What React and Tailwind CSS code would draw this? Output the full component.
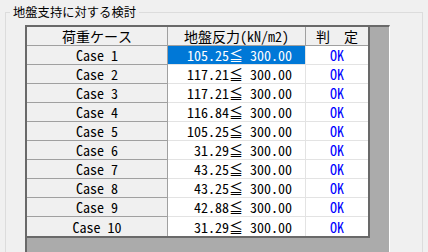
const rows = [
  { name: "Case 1", value: "105.25", limit: "300.00", result: "OK" },
  { name: "Case 2", value: "117.21", limit: "300.00", result: "OK" },
  { name: "Case 3", value: "117.21", limit: "300.00", result: "OK" },
  { name: "Case 4", value: "116.84", limit: "300.00", result: "OK" },
  { name: "Case 5", value: "105.25", limit: "300.00", result: "OK" },
  { name: "Case 6", value: "31.29", limit: "300.00", result: "OK" },
  { name: "Case 7", value: "43.25", limit: "300.00", result: "OK" },
  { name: "Case 8", value: "43.25", limit: "300.00", result: "OK" },
  { name: "Case 9", value: "42.88", limit: "300.00", result: "OK" },
  { name: "Case 10", value: "31.29", limit: "300.00", result: "OK" },
];

const mono = "font-['Noto_Sans_Mono_CJK_JP','Noto_Sans_CJK_JP','DejaVu_Sans_Mono',monospace]";

function HeaderCell({ children, last }) {
  return (
    <div
      className={
        last
          ? "h-[19px] bg-[#f0f0f0] border-b border-[#a0a0a0] flex items-center justify-center text-black"
          : "h-[19px] bg-[#f0f0f0] border-r border-b border-[#a0a0a0] flex items-center justify-center text-black"
      }
    >
      {children}
    </div>
  );
}

export default function App() {
  return (
    <div className="w-[428px] h-[252px] overflow-hidden bg-[#f0f0f0] pl-[5px] pt-[5px] font-['Noto_Sans_CJK_JP',sans-serif]">
      <fieldset className="w-[418px] h-[270px] border border-[#dcdcdc] m-0 p-0">
        <legend className="ml-[4px] px-[3px] text-[12.3px] leading-[14px] text-black">
          地盤支持に対する検討
        </legend>
        <div className="ml-[19px] mt-[6px] w-[365px] h-[240px] bg-[#ababab] border-l-2 border-t-2 border-[#696969] border-r border-r-white">
          <div className={`w-fit grid grid-cols-[141px_138px_62px] border-r-2 border-b-2 border-[#696969] text-[14px] leading-[18px] font-light ${mono}`}>
            <HeaderCell>荷重ケース</HeaderCell>
            <HeaderCell>地盤反力(kN/m2)</HeaderCell>
            <HeaderCell last>判　定</HeaderCell>
            {rows.map((r, i) => {
              const isLast = i === rows.length - 1;
              const selected = i === 0;
              return [
                <div
                  key={`n${i}`}
                  className={
                    isLast
                      ? "h-[19px] bg-[#f0f0f0] border-r border-[#a0a0a0] flex items-center justify-center text-black"
                      : "h-[19px] bg-[#f0f0f0] border-r border-b border-[#a0a0a0] flex items-center justify-center text-black"
                  }
                >
                  {r.name}
                </div>,
                <div
                  key={`v${i}`}
                  className={
                    (isLast ? "h-[19px] border-r " : "h-[19px] border-r border-b ") +
                    (selected
                      ? "bg-[#0078d7] text-white border-[#e3e3e3] flex items-center justify-end pr-[13px] whitespace-pre"
                      : "bg-white text-black border-[#e3e3e3] flex items-center justify-end pr-[13px] whitespace-pre")
                  }
                >
                  {r.value}≦ {r.limit}
                </div>,
                <div
                  key={`r${i}`}
                  className={
                    isLast
                      ? "h-[19px] bg-white flex items-center justify-center text-[#0000ff]"
                      : "h-[19px] bg-white border-b border-[#e3e3e3] flex items-center justify-center text-[#0000ff]"
                  }
                >
                  {r.result}
                </div>,
              ];
            })}
          </div>
        </div>
      </fieldset>
    </div>
  );
}
